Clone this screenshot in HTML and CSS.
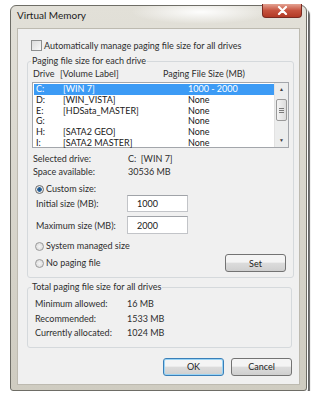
FILE: index.html
```html
<!DOCTYPE html>
<html>
<head>
    <meta charset="utf-8">
    <link rel="stylesheet" href="styles.css">
</head>

<body>

<div class='window'>
    <div class='titlebar'>
        <span class='title'>Virtual Memory</span>
        <div class='close'>
            <svg width="11" height="9" viewBox="0 0 11 9"><path d="M2 1 L9 8 M9 1 L2 8" stroke="#fff" stroke-width="2.2" stroke-linecap="round"/></svg>
        </div>
    </div>
    <div class='client'>
        <div class='check_row'><span class='checkbox'></span>Automatically manage paging file size for all drives</div>

        <fieldset class='group drives'>
            <legend>Paging file size for each drive</legend>
            <div class='cols'><span>Drive</span><span>[Volume Label]</span><span>Paging File Size (MB)</span></div>
            <div class='listbox'>
                <ul class='rows'>
                    <li class='selected'><span>C:</span><span>[WIN 7]</span><span>1000 - 2000</span></li>
                    <li><span>D:</span><span>[WIN_VISTA]</span><span>None</span></li>
                    <li><span>E:</span><span>[HDSata_MASTER]</span><span>None</span></li>
                    <li><span>G:</span><span></span><span>None</span></li>
                    <li><span>H:</span><span>[SATA2 GEO]</span><span>None</span></li>
                    <li><span>I:</span><span>[SATA2 MASTER]</span><span>None</span></li>
                </ul>
                <div class='scrollbar'>
                    <div class='arrow'>&#9650;</div>
                    <div class='track'>
                        <div class='thumb'><span></span><span></span><span></span></div>
                    </div>
                    <div class='arrow'>&#9660;</div>
                </div>
            </div>
            <div class='info'>
                <span>Selected drive:</span><span>C:&nbsp;&nbsp;[WIN 7]</span>
                <span>Space available:</span><span>30536 MB</span>
            </div>
            <div class='radio_row custom'><span class='radio checked'></span>Custom size:</div>
            <div class='size_row'><span>Initial size (MB):</span><div class='input'>1000</div></div>
            <div class='size_row second'><span>Maximum size (MB):</span><div class='input'>2000</div></div>
            <div class='radio_row system'><span class='radio'></span>System managed size</div>
            <div class='set_row'>
                <div class='radio_row'><span class='radio'></span>No paging file</div>
                <div class='button set'>Set</div>
            </div>
        </fieldset>

        <fieldset class='group totals'>
            <legend>Total paging file size for all drives</legend>
            <div class='info totals_info'>
                <span>Minimum allowed:</span><span>16 MB</span>
                <span>Recommended:</span><span>1533 MB</span>
                <span>Currently allocated:</span><span>1024 MB</span>
            </div>
        </fieldset>

        <div class='buttons'>
            <div class='button ok'>OK</div>
            <div class='button'>Cancel</div>
        </div>
    </div>
</div>

</body>
</html>
```

FILE: styles.css
```css
body {
    margin: 0;
    background: #fff;
    font-family: Lato, "Noto Sans", sans-serif;
    font-size: 9px;
    color: #2e2e2e;
}
.window {
    margin: 5px 0 0 10px;
    width: 297px;
    height: 386px;
    box-sizing: border-box;
    border: 1px solid #6e6d66;
    border-radius: 6px 6px 3px 3px;
    background:
        radial-gradient(ellipse 70px 12px at 190px 6px, rgba(255,255,255,.95), rgba(255,255,255,0)),
        linear-gradient(#e2e0d8, #cfccc1);
    padding: 0 6px 5px;
    display: flex;
    flex-direction: column;
    box-shadow: 1px 1px 0 #fff, 3px 4px 1px rgba(0,0,0,.6);
}
.titlebar {
    height: 22px;
    display: flex;
    align-items: flex-start;
}
.title {
    margin-top: 3px;
    line-height: 12px;
    font-size: 10px;
    color: #1c1c1c;
}
.close {
    margin: -2px -2px 0 auto;
    width: 40px;
    height: 14px;
    box-sizing: border-box;
    border: 1px solid #7a2a22;
    border-top: none;
    border-radius: 0 0 4px 4px;
    background: linear-gradient(#e4a292, #c6533f 50%, #b23a26);
    display: flex;
    align-items: center;
    justify-content: center;
}
.client {
    flex: 1;
    background: #f0f0f0;
    border: 1px solid #bdbab0;
    padding: 0 7px 0 9px;
    display: flex;
    flex-direction: column;
}
.check_row {
    margin: 11px 0 0 4px;
    height: 11px;
    line-height: 11px;
    display: flex;
    align-items: center;
    gap: 2px;
}
.checkbox {
    width: 9px;
    height: 9px;
    border: 1px solid #8e8f8f;
    background: linear-gradient(135deg, #dcdcdc, #f8f8f8);
}
.group {
    margin: 4px 0 0 0;
    padding: 0 4px;
    border: 1px solid #d5d9dc;
    border-radius: 3px;
}
.group legend {
    padding: 0 1px;
    margin-left: -1px;
    line-height: 12px;
}
.cols {
    margin-top: 1px;
    height: 11px;
    line-height: 11px;
    display: grid;
    grid-template-columns: 27px 103px auto;
    padding-left: 1px;
}
.listbox {
    margin-top: 3px;
    width: 257px;
    height: 66px;
    box-sizing: border-box;
    border: 1px solid #a3a6ab;
    background: #fff;
    display: flex;
}
.rows {
    flex: 1;
    margin: 1px 0 0 1px;
    padding: 0;
    list-style: none;
}
.rows li {
    height: 10.8px;
    line-height: 10.8px;
    padding-left: 2px;
    display: grid;
    grid-template-columns: 27px 125px auto;
    color: #202020;
}
.rows li.selected {
    background: #3c9bf5;
    color: #fff;
}
.scrollbar {
    width: 13px;
    display: flex;
    flex-direction: column;
    background: #eceded;
    border-left: 1px solid #e2e2e2;
}
.arrow {
    height: 13px;
    font-size: 5px;
    line-height: 13px;
    text-align: center;
    color: #404040;
}
.track {
    flex: 1;
    padding-top: 3px;
}
.thumb {
    margin: 0 1px;
    height: 22px;
    box-sizing: border-box;
    border: 1px solid #9a9a9a;
    border-radius: 2px;
    background: linear-gradient(90deg, #f4f4f4, #dcdcdc);
    display: flex;
    flex-direction: column;
    justify-content: center;
    align-items: center;
    gap: 1px;
}
.thumb span {
    width: 5px;
    height: 1px;
    background: #7a7a7a;
}
.info {
    margin-top: 4px;
    padding-left: 1px;
    display: grid;
    grid-template-columns: 95px auto;
    line-height: 13px;
}
.radio_row {
    height: 12px;
    line-height: 12px;
    margin-left: 3px;
    display: flex;
    align-items: center;
    gap: 2px;
}
.custom {
    margin-top: 5px;
}
.system {
    margin-top: 6px;
}
.radio {
    width: 7px;
    height: 7px;
    border: 1px solid #9a9a9a;
    border-radius: 50%;
    background: radial-gradient(circle, #f4f4f4, #d6d6d6);
}
.radio.checked {
    background: radial-gradient(circle, #1d4c78 0, #2f6aa3 2px, #e8e8e8 2.6px);
    border-color: #6a6a6a;
}
.size_row {
    height: 17px;
    padding-left: 4px;
    display: grid;
    grid-template-columns: 91px 61px;
    align-items: center;
}
.size_row.second {
    margin-top: 4px;
    height: 18px;
}
.input {
    height: 100%;
    box-sizing: border-box;
    border: 1px solid #c2c4c8;
    border-top-color: #a0a3a8;
    background: #fff;
    padding-left: 9px;
    display: flex;
    align-items: center;
    color: #202020;
}
.set_row {
    margin-top: 2px;
    margin-bottom: 5px;
    height: 18px;
    display: flex;
    align-items: center;
    justify-content: space-between;
}
.button {
    width: 61px;
    height: 18px;
    box-sizing: border-box;
    border: 1px solid #737373;
    border-radius: 3px;
    background: linear-gradient(#f4f4f4 45%, #dcdcdc 50%, #cfcfcf);
    display: flex;
    align-items: center;
    justify-content: center;
    color: #1e1e1e;
}
.button.set {
    margin-right: 3px;
}
.totals {
    margin-top: 3px;
    padding-bottom: 6px;
}
.totals_info {
    padding-left: 3px;
    grid-template-columns: 92px auto;
    line-height: 14.5px;
}
.buttons {
    margin-top: 10px;
    display: flex;
    justify-content: flex-end;
    gap: 7px;
}
.button.ok {
    border-color: #3a7fb8;
    box-shadow: inset 0 0 0 1px #9ad4f5;
}
```
